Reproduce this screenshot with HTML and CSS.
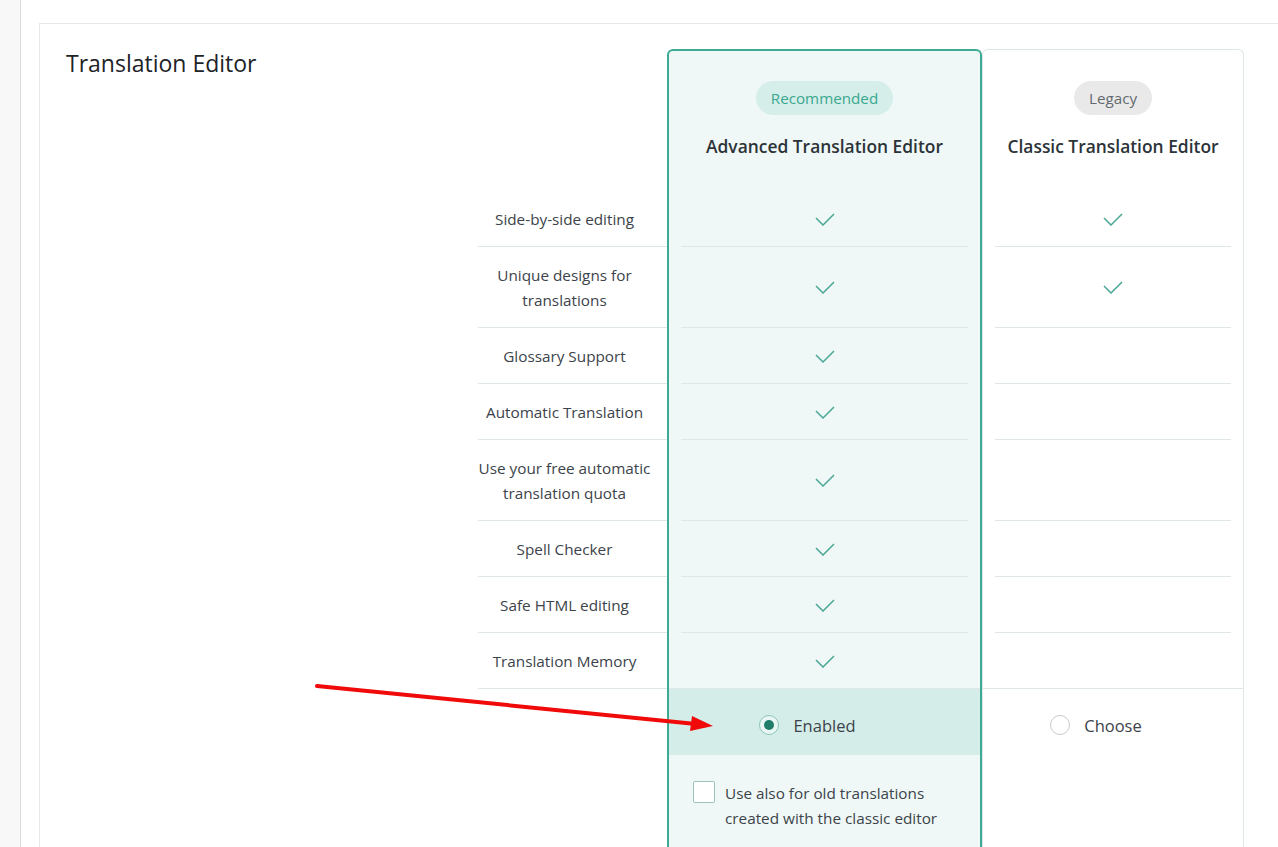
FILE: index.html
```html
<!DOCTYPE html>
<html lang="en">
<head>
<meta charset="UTF-8">
<meta name="viewport" content="width=device-width, initial-scale=1.0">
<title>Translation Editor</title>
<link rel="stylesheet" href="styles.css">
</head>
<body>

<div class="sidebar"></div>

<div class="main">
    <div class="card">
        <div class="card-title">
            <h2>Translation Editor</h2>
        </div>

        <div class="compare">
            <div class="col features">
                <div class="col-head"></div>
                <div class="row">Side-by-side editing</div>
                <div class="row tall">Unique designs for<br>translations</div>
                <div class="row">Glossary Support</div>
                <div class="row">Automatic Translation</div>
                <div class="row tall">Use your free automatic<br>translation quota</div>
                <div class="row">Spell Checker</div>
                <div class="row">Safe HTML editing</div>
                <div class="row">Translation Memory</div>
            </div>

            <div class="col advanced">
                <div class="col-head">
                    <span class="badge badge-green">Recommended</span>
                    <div class="col-name">Advanced Translation Editor</div>
                </div>
                <div class="row"><svg class="check" width="20" height="13" viewBox="0 0 20 13"><path d="M1 5 L8 12 L19 1"/></svg></div>
                <div class="row tall"><svg class="check" width="20" height="13" viewBox="0 0 20 13"><path d="M1 5 L8 12 L19 1"/></svg></div>
                <div class="row"><svg class="check" width="20" height="13" viewBox="0 0 20 13"><path d="M1 5 L8 12 L19 1"/></svg></div>
                <div class="row"><svg class="check" width="20" height="13" viewBox="0 0 20 13"><path d="M1 5 L8 12 L19 1"/></svg></div>
                <div class="row tall"><svg class="check" width="20" height="13" viewBox="0 0 20 13"><path d="M1 5 L8 12 L19 1"/></svg></div>
                <div class="row"><svg class="check" width="20" height="13" viewBox="0 0 20 13"><path d="M1 5 L8 12 L19 1"/></svg></div>
                <div class="row"><svg class="check" width="20" height="13" viewBox="0 0 20 13"><path d="M1 5 L8 12 L19 1"/></svg></div>
                <div class="row last"><svg class="check" width="20" height="13" viewBox="0 0 20 13"><path d="M1 5 L8 12 L19 1"/></svg></div>
                <label class="choice active">
                    <span class="radio checked"></span>
                    <span>Enabled</span>
                </label>
                <label class="old-option">
                    <span class="checkbox"></span>
                    <span>Use also for old translations<br>created with the classic editor</span>
                </label>
            </div>

            <div class="col classic">
                <div class="col-head">
                    <span class="badge badge-gray">Legacy</span>
                    <div class="col-name">Classic Translation Editor</div>
                </div>
                <div class="row"><svg class="check" width="20" height="13" viewBox="0 0 20 13"><path d="M1 5 L8 12 L19 1"/></svg></div>
                <div class="row tall"><svg class="check" width="20" height="13" viewBox="0 0 20 13"><path d="M1 5 L8 12 L19 1"/></svg></div>
                <div class="row"></div>
                <div class="row"></div>
                <div class="row tall"></div>
                <div class="row"></div>
                <div class="row"></div>
                <div class="row last"></div>
                <label class="choice">
                    <span class="radio"></span>
                    <span>Choose</span>
                </label>
            </div>
        </div>
    </div>
</div>

<svg class="arrow" width="1278" height="847" viewBox="0 0 1278 847">
    <line x1="317" y1="686" x2="696" y2="724" stroke="#f00a0a" stroke-width="4" stroke-linecap="round"/>
    <polygon points="713,726 690,731 692,716" fill="#f00a0a"/>
</svg>

</body>
</html>
```

FILE: styles.css
```css
body {
    margin: 0;
    height: 847px;
    overflow: hidden;
    display: flex;
    background: #fff;
    font-family: "Open Sans", "Noto Sans", sans-serif;
    color: #3c434a;
}
.sidebar {
    width: 20px;
    flex-shrink: 0;
    background: #f8f8f8;
    border-right: 1px solid #dcdcdc;
}
.main {
    flex: 1;
    padding: 23px 0 0 18px;
}
.card {
    display: flex;
    width: 1246px;
    box-sizing: border-box;
    border: 1px solid #e8e8e8;
    border-bottom: none;
    padding: 25px 40px 0 26px;
}
.card-title {
    width: 412px;
    flex-shrink: 0;
}
.card-title h2 {
    margin: 0;
    font-size: 23px;
    font-weight: 400;
    line-height: 28px;
    color: #1d2327;
}
.compare {
    display: flex;
}
.col {
    display: flex;
    flex-direction: column;
    box-sizing: border-box;
}
.features {
    width: 189px;
}
.features .col-head {
    height: 142px;
}
.row {
    height: 56px;
    box-sizing: border-box;
    border-bottom: 1px solid #dfe6e8;
    display: flex;
    align-items: center;
    justify-content: center;
    text-align: center;
    font-size: 15.3px;
    line-height: 25px;
    padding-top: 1px;
}
.row.tall {
    height: 81px;
}
.features .row {
    padding-right: 16px;
}
.advanced {
    width: 315px;
    border: 2px solid #3daa93;
    border-bottom: none;
    border-radius: 6px 6px 0 0;
    background: #eff8f6;
}
.advanced .col-head {
    height: 140px;
}
.classic {
    width: 262px;
    border: 1px solid #dfe6e8;
    border-bottom: none;
    border-radius: 6px 6px 0 0;
}
.classic .col-head {
    height: 141px;
    padding-top: 1px;
}
.col-head {
    display: flex;
    flex-direction: column;
    align-items: center;
    box-sizing: border-box;
}
.advanced .row,
.classic .row {
    margin: 0 12px;
}
.advanced .row.last,
.classic .row.last {
    margin: 0;
}
.badge {
    margin-top: 30px;
    height: 34px;
    line-height: 35px;
    padding: 0 15px;
    border-radius: 17px;
    font-size: 15.2px;
}
.badge-green {
    background: #d5eeea;
    color: #3aa78f;
}
.badge-gray {
    background: #e9e9e9;
    color: #646970;
}
.col-name {
    margin-top: 19px;
    font-size: 17.4px;
    font-weight: 600;
    line-height: 24px;
    color: #2c3338;
}
.check {
    fill: none;
    stroke: #4aa795;
    stroke-width: 1.5;
}
.choice {
    height: 66px;
    box-sizing: border-box;
    display: flex;
    align-items: center;
    justify-content: center;
    gap: 14px;
    padding: 6px 34px 0 0;
    font-size: 16.5px;
    color: #3c434a;
}
.choice.active {
    background: #d4ede8;
}
.radio {
    width: 20px;
    height: 20px;
    box-sizing: border-box;
    border-radius: 50%;
    border: 1px solid #c6cacc;
    background: #fff;
    display: flex;
    align-items: center;
    justify-content: center;
}
.radio.checked {
    border-color: #8cc6ba;
    background: #e9f6f3;
}
.radio.checked::after {
    content: "";
    width: 10px;
    height: 10px;
    border-radius: 50%;
    background: #1f7d6a;
}
.old-option {
    display: flex;
    gap: 10px;
    padding: 26px 0 0 24px;
    height: 130px;
    box-sizing: border-box;
    font-size: 15.3px;
    line-height: 25px;
}
.checkbox {
    width: 22px;
    height: 22px;
    flex-shrink: 0;
    box-sizing: border-box;
    border: 1px solid #9cc3bb;
    border-radius: 2px;
    background: #fff;
}
.arrow {
    position: absolute;
    top: 0;
    left: 0;
    pointer-events: none;
}
```
